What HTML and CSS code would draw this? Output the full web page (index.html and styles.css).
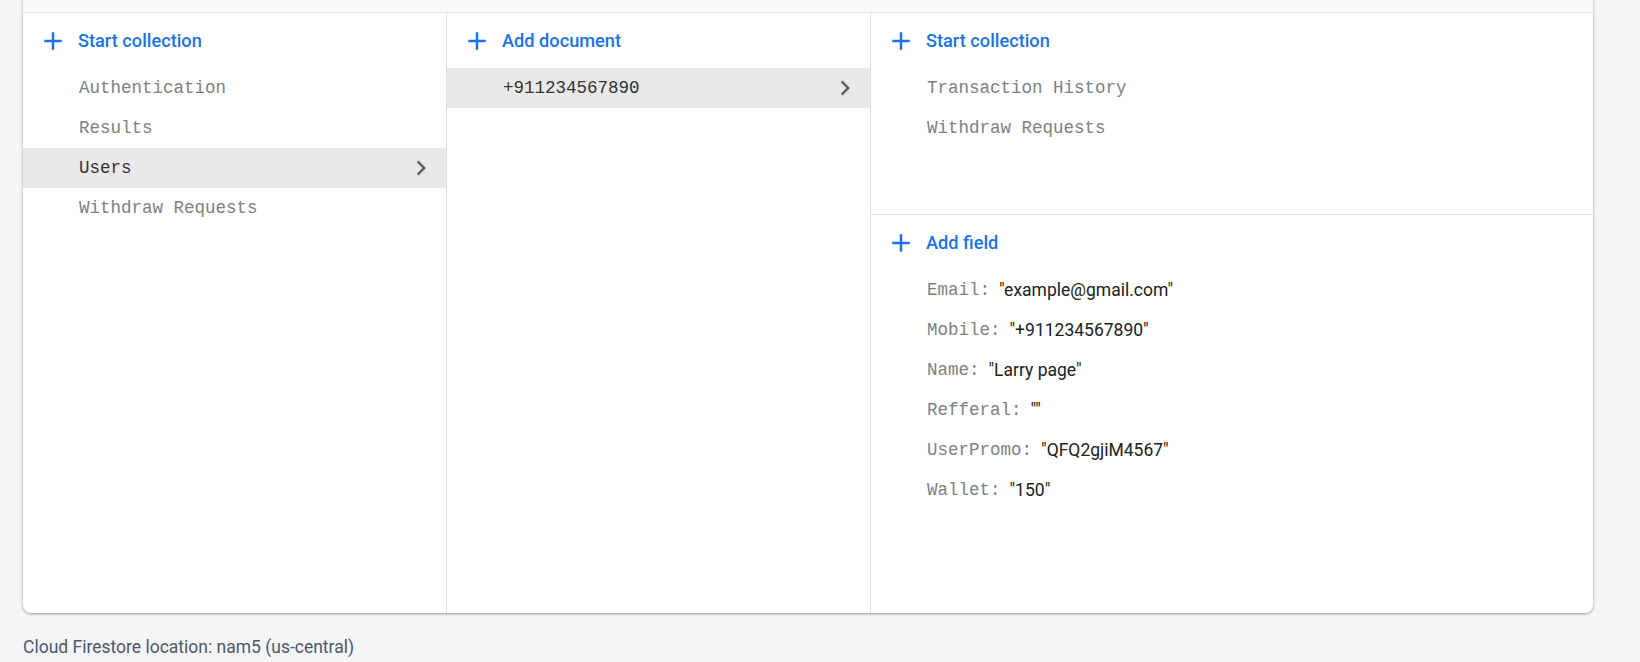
FILE: index.html
```html
<!DOCTYPE html>
<html>
<head>
<meta charset="utf-8">
<link rel="stylesheet" href="styles.css">
</head>
<body>
<div class="page">
  <div class="card">
    <div class="strip"></div>
    <div class="cols">
      <div class="col">
        <div class="action">
          <svg class="plus" viewBox="0 0 24 24"><path d="M19 13h-6v6h-2v-6H5v-2h6V5h2v6h6v2z"/></svg>
          <span>Start collection</span>
        </div>
        <div class="item">Authentication</div>
        <div class="item">Results</div>
        <div class="item selected"><span>Users</span><svg class="chev" viewBox="0 0 24 24"><path d="M10 6L8.59 7.41 13.17 12l-4.58 4.59L10 18l6-6z"/></svg></div>
        <div class="item">Withdraw Requests</div>
      </div>
      <div class="col">
        <div class="action">
          <svg class="plus" viewBox="0 0 24 24"><path d="M19 13h-6v6h-2v-6H5v-2h6V5h2v6h6v2z"/></svg>
          <span>Add document</span>
        </div>
        <div class="item selected"><span>+911234567890</span><svg class="chev" viewBox="0 0 24 24"><path d="M10 6L8.59 7.41 13.17 12l-4.58 4.59L10 18l6-6z"/></svg></div>
      </div>
      <div class="col last">
        <div class="subcols">
          <div class="action">
            <svg class="plus" viewBox="0 0 24 24"><path d="M19 13h-6v6h-2v-6H5v-2h6V5h2v6h6v2z"/></svg>
            <span>Start collection</span>
          </div>
          <div class="item">Transaction History</div>
          <div class="item">Withdraw Requests</div>
        </div>
        <div class="fields">
          <div class="action">
            <svg class="plus" viewBox="0 0 24 24"><path d="M19 13h-6v6h-2v-6H5v-2h6V5h2v6h6v2z"/></svg>
            <span>Add field</span>
          </div>
          <div class="field"><span class="key">Email:</span><span class="val">"example@gmail.com"</span></div>
          <div class="field"><span class="key">Mobile:</span><span class="val">"+911234567890"</span></div>
          <div class="field"><span class="key">Name:</span><span class="val">"Larry page"</span></div>
          <div class="field"><span class="key">Refferal:</span><span class="val">""</span></div>
          <div class="field"><span class="key">UserPromo:</span><span class="val">"QFQ2gjiM4567"</span></div>
          <div class="field"><span class="key">Wallet:</span><span class="val">"150"</span></div>
        </div>
      </div>
    </div>
  </div>
  <div class="footer">Cloud Firestore location: nam5 (us-central)</div>
</div>
</body>
</html>
```
FILE: styles.css
```css
html, body {
  margin: 0;
  padding: 0;
}
body {
  background: #f4f5f7;
  font-family: Roboto, "Liberation Sans", sans-serif;
}
.page {
  padding: 0 47px 0 23px;
}
.card {
  background: #fff;
  border-radius: 0 0 8px 8px;
  box-shadow: 0 1px 2px rgba(60, 64, 67, 0.3), 0 1px 3px 1px rgba(60, 64, 67, 0.15);
  overflow: hidden;
}
.strip {
  height: 12px;
  background: #fafafa;
  border-bottom: 1px solid #e0e0e0;
}
.cols {
  display: grid;
  grid-template-columns: 424px 424px 1fr;
  height: 600px;
}
.col {
  border-right: 1px solid #e0e0e0;
  display: flex;
  flex-direction: column;
}
.col.last {
  border-right: none;
}
.action {
  height: 55px;
  display: flex;
  align-items: center;
  padding-left: 15px;
  gap: 10px;
  color: #1a73e8;
  font-size: 18.2px;
  font-weight: 500;
}
.plus {
  width: 30px;
  height: 30px;
  fill: #1a73e8;
  flex: none;
}
.item {
  height: 40px;
  display: flex;
  align-items: center;
  justify-content: space-between;
  padding: 0 10px 0 56px;
  font-family: "Liberation Mono", "DejaVu Sans Mono", monospace;
  font-size: 17.5px;
  color: #808080;
}
.item.selected {
  background: #e9e9e9;
  color: #333;
}
.chev {
  width: 30px;
  height: 30px;
  fill: #616161;
  flex: none;
}
.subcols {
  height: 201px;
  border-bottom: 1px solid #e0e0e0;
}
.field {
  height: 40px;
  display: flex;
  align-items: center;
  padding-left: 56px;
  font-size: 17.5px;
}
.key {
  font-family: "Liberation Mono", "DejaVu Sans Mono", monospace;
  color: #808080;
}
.val {
  margin-left: 9px;
  color: #212121;
}
.footer {
  padding-top: 24px;
  font-size: 17.5px;
  color: #4f5764;
}
```
